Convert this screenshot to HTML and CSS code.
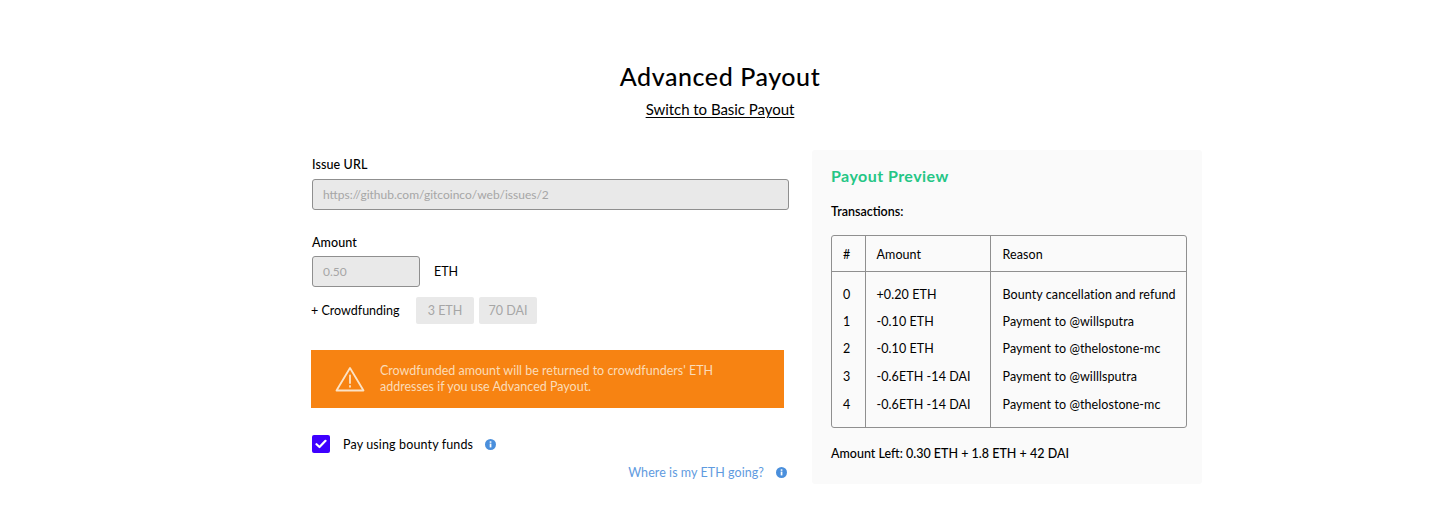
FILE: index.html
```html
<!DOCTYPE html>
<html lang="en">
<head>
<meta charset="utf-8">
<title>Advanced Payout</title>
<link rel="stylesheet" href="styles.css">
</head>
<body>
<header class="head">
  <h1 class="title">Advanced Payout</h1>
  <a class="switch" href="#">Switch to Basic Payout</a>
</header>
<main class="layout">
  <section class="form">
    <label class="label">Issue URL</label>
    <div class="field field-url">https://github.com/gitcoinco/web/issues/2</div>
    <label class="label label-amount">Amount</label>
    <div class="amount-row">
      <div class="field field-amount">0.50</div>
      <span class="unit">ETH</span>
    </div>
    <div class="crowd-row">
      <span class="crowd-label">+ Crowdfunding</span>
      <span class="chip chip-eth">3 ETH</span>
      <span class="chip chip-dai">70 DAI</span>
    </div>
    <div class="alert">
      <svg class="alert-icon" width="30" height="26" viewBox="0 0 30 26" fill="none" stroke="#fbe3c6" stroke-width="1.8" stroke-linejoin="round" stroke-linecap="round">
        <path d="M15 2 L28.5 24.5 H1.5 Z"/>
        <path d="M15 9.5 V17"/>
        <path d="M15 20 V20.8"/>
      </svg>
      <p class="alert-text">Crowdfunded amount will be returned to crowdfunders' ETH addresses if you use Advanced Payout.</p>
    </div>
    <div class="check-row">
      <span class="checkbox">
        <svg width="12" height="10" viewBox="0 0 12 10" fill="none" stroke="#fff" stroke-width="2.2" stroke-linecap="round" stroke-linejoin="round"><path d="M1.5 5.2 L4.5 8 L10.5 1.8"/></svg>
      </span>
      <span class="check-label">Pay using bounty funds</span>
      <svg class="info" width="11" height="11" viewBox="0 0 11 11"><circle cx="5.5" cy="5.5" r="5.5" fill="#4a8fdc"/><rect x="4.7" y="4.6" width="1.7" height="3.8" fill="#fff"/><rect x="4.7" y="2.3" width="1.7" height="1.5" fill="#fff"/></svg>
    </div>
    <div class="where-row">
      <a class="where" href="#">Where is my ETH going?</a>
      <svg class="info" width="11" height="11" viewBox="0 0 11 11"><circle cx="5.5" cy="5.5" r="5.5" fill="#4a8fdc"/><rect x="4.7" y="4.6" width="1.7" height="3.8" fill="#fff"/><rect x="4.7" y="2.3" width="1.7" height="1.5" fill="#fff"/></svg>
    </div>
  </section>
  <aside class="preview">
    <h2 class="preview-title">Payout Preview</h2>
    <h3 class="tx-title">Transactions:</h3>
    <div class="table-wrap">
      <table class="tx">
        <thead>
          <tr><th class="c1">#</th><th class="c2">Amount</th><th class="c3">Reason</th></tr>
        </thead>
        <tbody>
          <tr class="r0"><td class="c1">0</td><td class="c2">+0.20 ETH</td><td class="c3">Bounty cancellation and refund</td></tr>
          <tr class="r1"><td class="c1">1</td><td class="c2">-0.10 ETH</td><td class="c3">Payment to @willsputra</td></tr>
          <tr class="r1"><td class="c1">2</td><td class="c2">-0.10 ETH</td><td class="c3">Payment to @thelostone-mc</td></tr>
          <tr class="r2"><td class="c1">3</td><td class="c2">-0.6ETH -14 DAI</td><td class="c3">Payment to @willlsputra</td></tr>
          <tr class="r3"><td class="c1">4</td><td class="c2">-0.6ETH -14 DAI</td><td class="c3">Payment to @thelostone-mc</td></tr>
        </tbody>
      </table>
    </div>
    <p class="left">Amount Left: 0.30 ETH + 1.8 ETH + 42 DAI</p>
  </aside>
</main>
</body>
</html>
```
FILE: styles.css
```css
* { box-sizing: border-box; }
html, body { margin: 0; padding: 0; background: #fff; }
body {
  font-family: "Lato", "Noto Sans", sans-serif;
  color: #000;
  height: 505px;
  overflow: hidden;
}
.head { padding-top: 60px; text-align: center; }
.title {
  margin: 0;
  font-size: 25px;
  line-height: 32px;
  font-weight: 500;
  letter-spacing: 0.57px;
}
.switch {
  display: inline-block;
  margin-top: 8px;
  font-size: 15px;
  line-height: 18px;
  color: #000;
  letter-spacing: -0.04px;
  text-decoration: underline;
  text-underline-offset: 2px;
}
.layout {
  display: flex;
  margin-top: 32px;
  padding-left: 312px;
  gap: 23px;
  align-items: flex-start;
}
.form { width: 477px; padding-top: 7px; }
.label {
  display: block;
  font-size: 12.5px;
  line-height: 16px;
  letter-spacing: 0.1px;
  font-weight: 500;
}
.label-amount { margin-top: 25px; }
.field {
  background: #e9e9e9;
  border: 1px solid #8f8f8f;
  border-radius: 3px;
  color: #a6a6a6;
  font-size: 12px;
  height: 31px;
  line-height: 29px;
  padding-left: 10px;
}
.field-url { margin-top: 6px; }
.amount-row { display: flex; align-items: center; margin-top: 5px; }
.field-amount { width: 108px; }
.unit { margin-left: 14px; font-size: 12.5px; letter-spacing: 0; }
.crowd-row { display: flex; align-items: center; margin: 10px 0 0 -1px; }
.crowd-label { font-size: 12.5px; width: 105px; }
.chip {
  background: #e9e9e9;
  border-radius: 2px;
  color: #a6a6a6;
  font-size: 12.5px;
  height: 27px;
  line-height: 27px;
  text-align: center;
}
.chip-eth { width: 58px; }
.chip-dai { width: 58px; margin-left: 5px; }
.alert {
  display: flex;
  align-items: center;
  width: 473px;
  height: 58px;
  margin: 26px 0 0 -1px;
  background: #f78312;
  padding-left: 24px;
}
.alert-icon { flex: none; }
.alert-text {
  margin: 0 0 0 15px;
  width: 360px;
  font-size: 12.5px;
  line-height: 16px;
  color: #fbdcb8;
}
.check-row { display: flex; align-items: center; margin-top: 27px; }
.checkbox {
  width: 18px;
  height: 18px;
  border-radius: 2px;
  background: #3e00ff;
  display: flex;
  align-items: center;
  justify-content: center;
}
.check-label { margin-left: 13px; font-size: 12.5px; letter-spacing: 0.13px; }
.check-row .info { margin-left: 12px; }
.where-row { display: flex; justify-content: flex-end; align-items: center; margin-top: 11px; padding-right: 2px; height: 16px; }
.where { font-size: 12.5px; letter-spacing: 0.06px; color: #5f9be0; text-decoration: none; }
.where-row .info { margin-left: 12px; }
.preview {
  width: 390px;
  height: 334px;
  background: #fafafa;
  border-radius: 3px;
  padding: 16px 15px 0 19px;
}
.preview-title {
  margin: 0;
  font-size: 16px;
  line-height: 20px;
  font-weight: 700;
  color: #25c685;
  letter-spacing: 0.45px;
}
.tx-title {
  margin: 18px 0 0;
  font-size: 12.5px;
  line-height: 16px;
  font-weight: 600;
}
.table-wrap {
  margin-top: 15px;
  width: 356px;
  height: 193px;
  border: 1px solid #8f8f8f;
  border-radius: 3px;
}
.tx {
  width: 100%;
  border-collapse: collapse;
  table-layout: fixed;
  font-size: 12.5px;
  letter-spacing: 0.08px;
  height: 191px;
}
.tx th, .tx td { padding: 0 0 0 11px; text-align: left; font-weight: 400; vertical-align: middle; }
.tx th { height: 35px; padding-top: 3px; border-bottom: 1px solid #8f8f8f; }
.tx .c1 { width: 33px; border-right: 1px solid #8f8f8f; }
.tx .c2 { width: 125px; border-right: 1px solid #8f8f8f; }
.tx .c3 { padding-left: 12px; }
.tx td { vertical-align: top; line-height: 15px; }
.r0 td { height: 36px; padding-top: 15px; }
.r1 td { height: 27px; padding-top: 7px; }
.r2 td { height: 28px; padding-top: 7px; }
.r3 td { height: 37px; padding-top: 7px; }
.left {
  margin: 18px 0 0;
  font-size: 12.5px;
  line-height: 16px;
  font-weight: 500;
}
```
